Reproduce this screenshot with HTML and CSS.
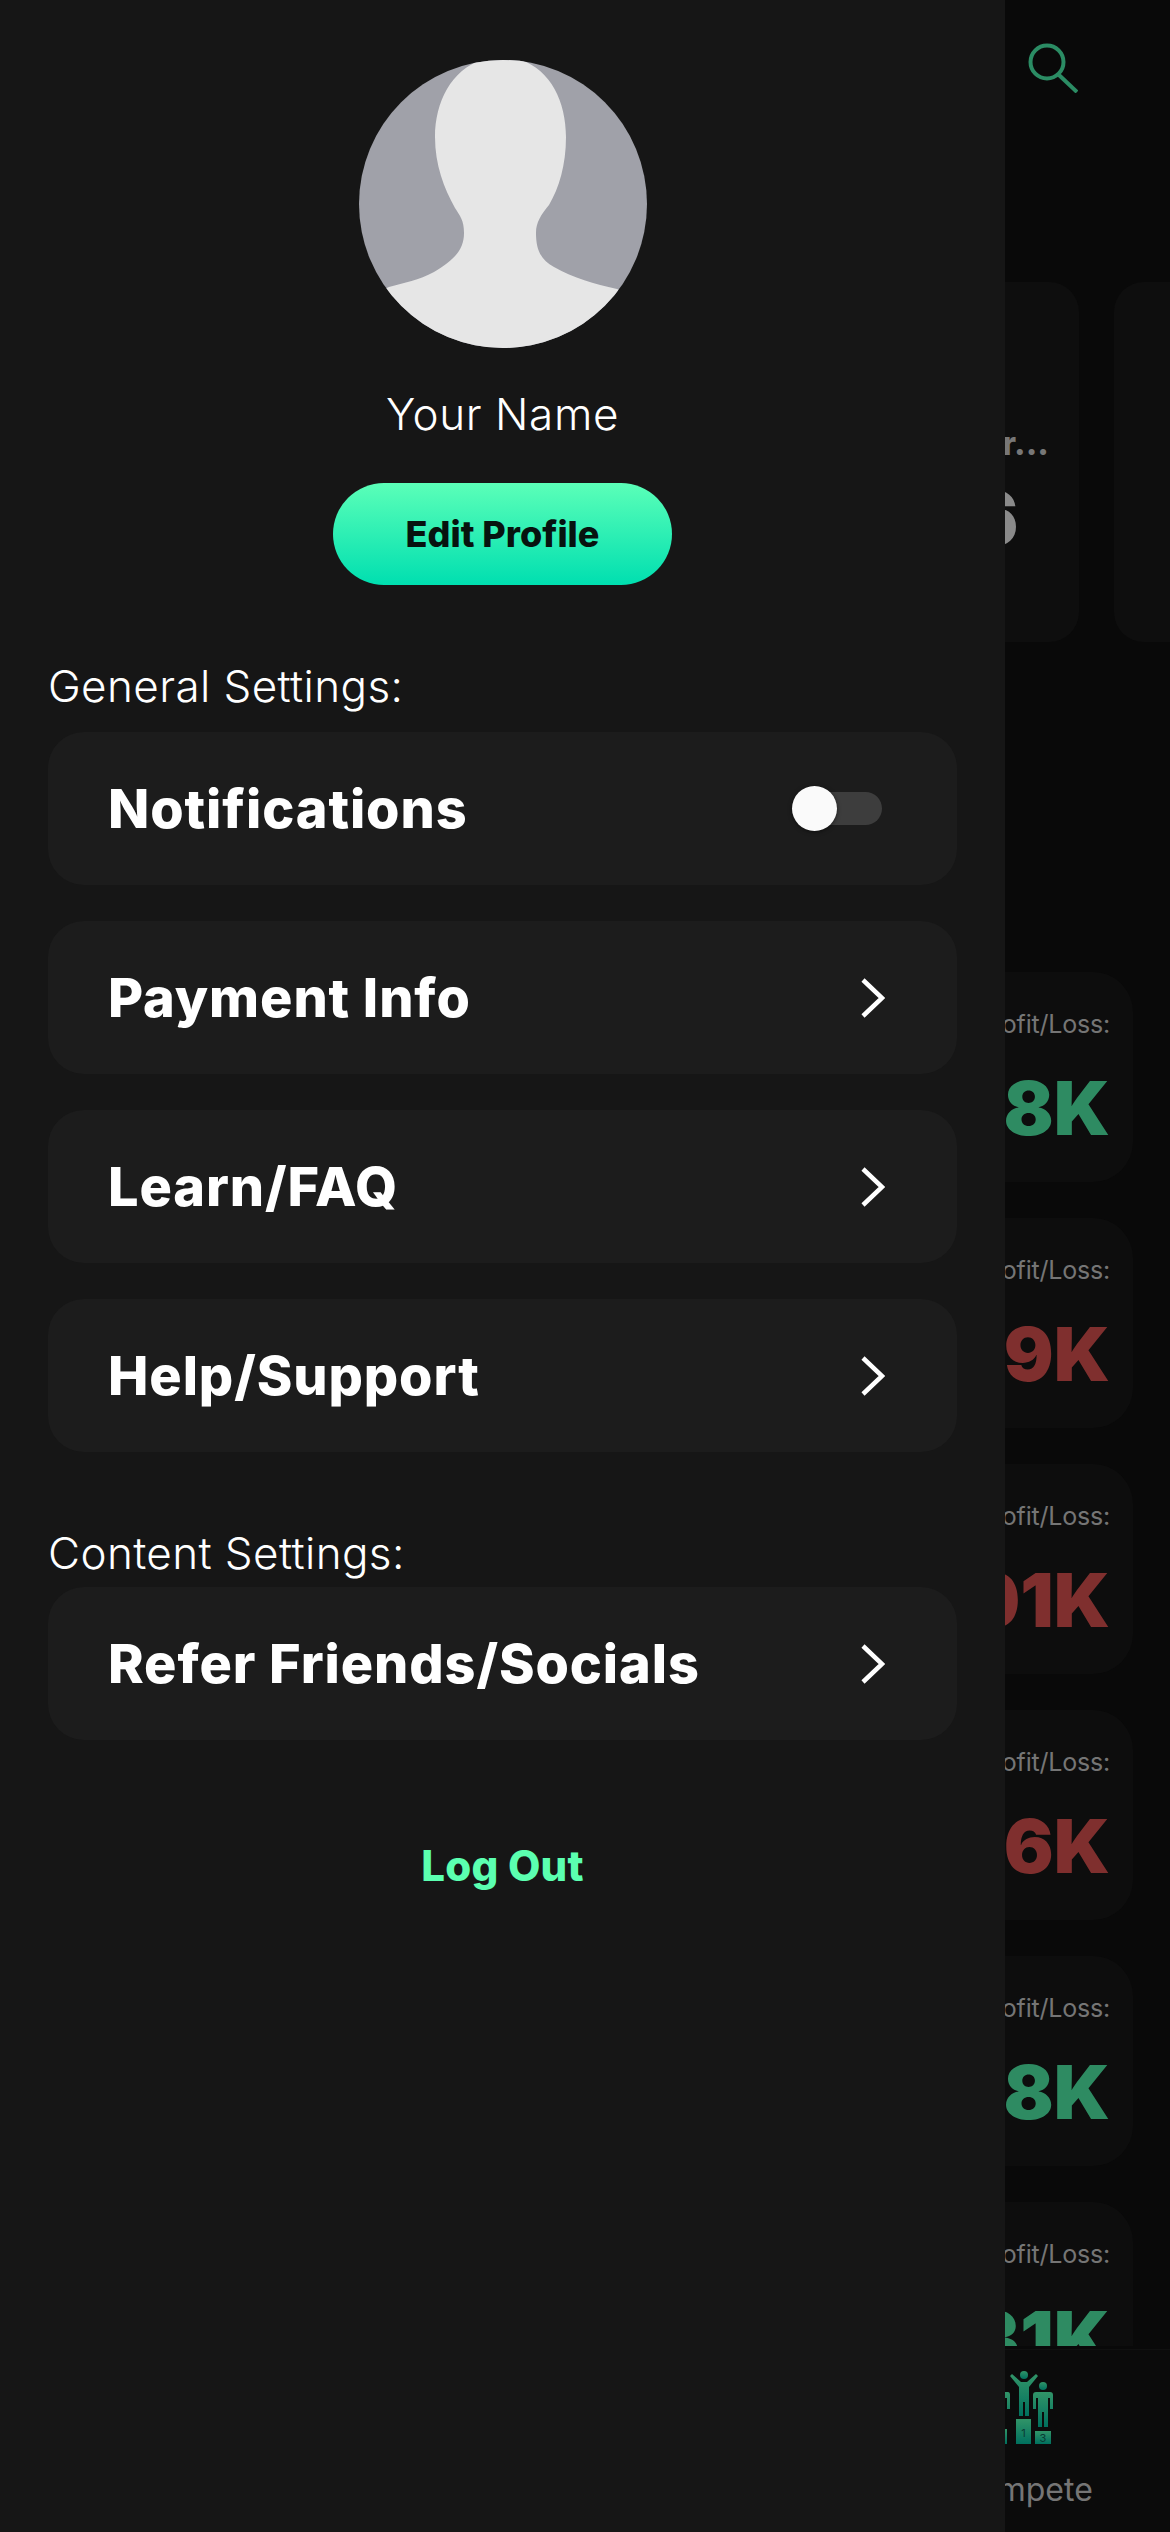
FILE: index.html
```html
<!DOCTYPE html>
<html lang="en">
<head>
    <meta charset="UTF-8">
    <meta name="viewport" content="width=device-width, initial-scale=1.0">
    <title>Settings</title>
    <link rel="stylesheet" href="styles.css">
</head>
<body>

    <div class="screen">
        <div class="topbar">
            <svg class="search-icon" viewBox="0 0 50 50" fill="none" stroke="#2b8c64" stroke-width="4">
                <circle cx="19" cy="19" r="16.500"/>
                <path d="M31 32 L49 49"/>
            </svg>
        </div>

        <div class="top-cards">
            <div class="top-card">
                <div class="top-card-title">Str...</div>
                <div class="top-card-value">6</div>
            </div>
            <div class="top-card top-card-next"></div>
        </div>

        <div class="results">
            <div class="result"><div class="result-label">Profit/Loss:</div><div class="result-value up">$38K</div></div>
            <div class="result"><div class="result-label">Profit/Loss:</div><div class="result-value down">$49K</div></div>
            <div class="result"><div class="result-label">Profit/Loss:</div><div class="result-value down">$01K</div></div>
            <div class="result"><div class="result-label">Profit/Loss:</div><div class="result-value down">$16K</div></div>
            <div class="result"><div class="result-label">Profit/Loss:</div><div class="result-value up">$08K</div></div>
            <div class="result"><div class="result-label">Profit/Loss:</div><div class="result-value up">$31K</div></div>
        </div>

        <div class="bottom-nav">
            <div class="nav-item">
                <svg class="podium-icon" viewBox="0 0 100 80">
                    <defs>
                        <linearGradient id="podiumFill" x1="0" y1="0" x2="0" y2="1">
                            <stop offset="0" stop-color="#319468"/>
                            <stop offset="1" stop-color="#00705e"/>
                        </linearGradient>
                    </defs>
                    <g fill="url(#podiumFill)">
                        <circle cx="25" cy="18" r="4"/>
                        <path d="M16 24 H34 Q36 24 36 27 V41 H33 V30 H31 V59 H26 V44 H24 V59 H19 V30 H17 V41 H14 V27 Q14 24 16 24Z"/>
                        <rect x="17" y="61" width="16" height="15"/>
                        <circle cx="50" cy="7" r="4"/>
                        <path d="M36 8 L38 6 L47 14 H53 L62 6 L64 8 L55 19 V48 H51 V34 H49 V48 H45 V19Z"/>
                        <rect x="42" y="51" width="15" height="25"/>
                        <circle cx="69" cy="18" r="4"/>
                        <path d="M62 24 H76 Q79 24 79 27 V41 H76 V30 H74 V59 H70 V44 H68 V59 H64 V30 H62 V41 H59 V27 Q59 24 62 24Z"/>
                        <rect x="61" y="63" width="16" height="13"/>
                    </g>
                    <text class="podium-digit" x="49.500" y="69">1</text>
                    <text class="podium-digit" x="69" y="74">3</text>
                </svg>
                <span class="nav-label">Compete</span>
            </div>
        </div>
    </div>

    <div class="drawer">
        <svg class="avatar" viewBox="0 0 288 288">
            <defs>
                <clipPath id="avatarClip"><circle cx="144" cy="144" r="144"/></clipPath>
            </defs>
            <g clip-path="url(#avatarClip)">
                <rect width="288" height="288" fill="#a0a1a9"/>
                <path fill="#e6e6e6" d="M142 -3 C100 -3 76 35 76 77 C76 105 85 128 96 148 C101 156 105 160 105 173 C105 190 95 200 75 212 C60 220 45 223 30 227 L0 240 L0 288 H288 V240 L258 229 C235 224 215 218 195 207 C182 200 177 190 177 173 C177 162 182 155 190 145 C200 128 207 105 207 77 C207 35 185 -3 142 -3Z"/>
            </g>
        </svg>
        <div class="profile-name">Your Name</div>
        <div class="edit-btn">Edit Profile</div>

        <div class="section-title">General Settings:</div>
        <div class="rows">
            <div class="row">
                <span>Notifications</span>
                <div class="toggle"><div class="toggle-thumb"></div></div>
            </div>
            <div class="row">
                <span>Payment Info</span>
                <svg class="chevron" viewBox="0 0 24 40"><path d="M2 2 L21 20 L2 38"/></svg>
            </div>
            <div class="row">
                <span>Learn/FAQ</span>
                <svg class="chevron" viewBox="0 0 24 40"><path d="M2 2 L21 20 L2 38"/></svg>
            </div>
            <div class="row">
                <span>Help/Support</span>
                <svg class="chevron" viewBox="0 0 24 40"><path d="M2 2 L21 20 L2 38"/></svg>
            </div>
        </div>

        <div class="section-title content-title">Content Settings:</div>
        <div class="rows">
            <div class="row">
                <span>Refer Friends/Socials</span>
                <svg class="chevron" viewBox="0 0 24 40"><path d="M2 2 L21 20 L2 38"/></svg>
            </div>
        </div>

        <div class="logout">Log Out</div>
    </div>

</body>
</html>
```

FILE: styles.css
```css
html, body {
    margin: 0;
    padding: 0;
}
body {
    width: 1170px;
    height: 2532px;
    overflow: hidden;
    position: relative;
    background: #090909;
    font-family: Inter, "Liberation Sans", sans-serif;
    color: #fff;
}

/* screen behind the drawer */
.screen {
    height: 2532px;
    display: flex;
    flex-direction: column;
}
.topbar {
    height: 282px;
    flex: none;
    box-sizing: border-box;
    padding: 43px 92px 0 0;
    display: flex;
    justify-content: flex-end;
}
.search-icon {
    width: 50px;
    height: 50px;
}
.top-cards {
    display: flex;
    gap: 35px;
    height: 360px;
    flex: none;
    padding-left: 719px;
}
.top-card {
    width: 360px;
    flex: none;
    box-sizing: border-box;
    background: #0e0e0e;
    border-radius: 30px;
    padding-top: 146px;
    text-align: right;
}
.top-card-next {
    width: auto;
    flex: 1;
    border-radius: 30px 0 0 30px;
}
.top-card-title {
    margin-top: -8px;
    font-size: 33px;
    line-height: 46px;
    font-weight: 800;
    color: #777;
    padding-right: 30px;
}
.top-card-value {
    margin-top: 14px;
    font-size: 74px;
    line-height: 76px;
    font-weight: 800;
    color: #8a8a8a;
    padding-right: 60px;
}
.results {
    flex: 1;
    min-height: 0;
    overflow: hidden;
    margin: 330px 37px 3px 37px;
    display: flex;
    flex-direction: column;
    gap: 36px;
}
.result {
    height: 210px;
    flex: none;
    box-sizing: border-box;
    background: #0d0d0d;
    border-radius: 40px;
    padding: 33px 23px 0 0;
    text-align: right;
}
.result-label {
    font-size: 25px;
    letter-spacing: -0.2px;
    line-height: 38px;
    color: #757575;
}
.result-value {
    font-size: 74px;
    line-height: 88px;
    font-weight: 900;
    margin-top: 21px;
}
.up {
    color: #2e8b62;
}
.down {
    color: #7f2f2e;
}
.bottom-nav {
    height: 183px;
    flex: none;
    box-sizing: border-box;
    background: #0b0b0b;
    border-top: 1px solid #101010;
    display: flex;
    justify-content: flex-end;
    padding: 18px 77px 0 0;
}
.nav-item {
    width: 138px;
    display: flex;
    flex-direction: column;
    align-items: center;
}
.podium-icon {
    width: 100px;
    height: 80px;
}
.podium-digit {
    font-size: 11px;
    fill: #0a3b33;
    text-anchor: middle;
}
.nav-label {
    margin-top: 22px;
    font-size: 32px;
    line-height: 40px;
    color: #757575;
}

/* drawer */
.drawer {
    position: absolute;
    top: 0;
    left: 0;
    width: 1005px;
    height: 2532px;
    box-sizing: border-box;
    background: #161616;
    padding: 60px 48px 0;
    display: flex;
    flex-direction: column;
}
.avatar {
    width: 288px;
    height: 288px;
    flex: none;
    align-self: center;
}
.profile-name {
    margin-top: 36px;
    text-align: center;
    font-size: 44px;
    letter-spacing: 0.6px;
    line-height: 60px;
    font-weight: 300;
}
.edit-btn {
    margin-top: 39px;
    align-self: center;
    width: 339px;
    height: 102px;
    border-radius: 51px;
    background: linear-gradient(#5bffb8, #00dfb0);
    color: #07130f;
    font-size: 36px;
    font-weight: 800;
    line-height: 102px;
    text-align: center;
}
.section-title {
    margin-top: 71px;
    font-size: 44px;
    letter-spacing: 0.4px;
    line-height: 60px;
    font-weight: 300;
}
.rows {
    margin-top: 16px;
    display: flex;
    flex-direction: column;
    gap: 36px;
}
.content-title + .rows {
    margin-top: 4px;
}
.row {
    height: 153px;
    box-sizing: border-box;
    background: #1c1c1c;
    border-radius: 36px;
    padding: 0 72px 0 60px;
    display: flex;
    align-items: center;
    justify-content: space-between;
    font-size: 54px;
    font-weight: 800;
    letter-spacing: 0.9px;
}
.chevron {
    width: 24px;
    height: 40px;
    fill: none;
    stroke: #fff;
    stroke-width: 4.500;
}
.toggle {
    position: relative;
    width: 90px;
    height: 33px;
    margin-right: 3px;
    border-radius: 17px;
    background: #3d3d3d;
}
.toggle-thumb {
    position: absolute;
    top: -6px;
    left: 0;
    width: 45px;
    height: 45px;
    border-radius: 50%;
    background: #fafafa;
    box-shadow: 0 1px 4px rgba(0, 0, 0, 0.5);
}
.logout {
    margin-top: 96px;
    text-align: center;
    font-size: 42px;
    letter-spacing: 0.2px;
    line-height: 60px;
    font-weight: 800;
    color: #5bffb0;
}
```
